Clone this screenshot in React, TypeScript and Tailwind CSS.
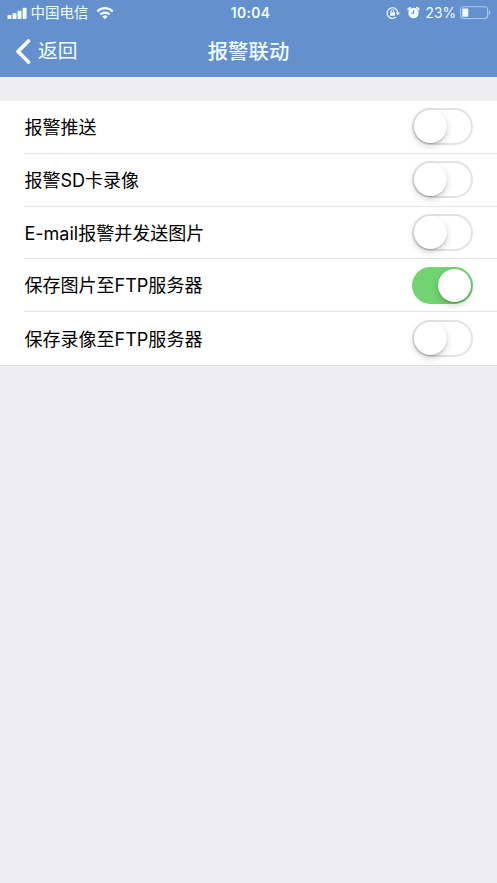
import { useState } from "react";

const FONT = "font-['Inter','Noto_Sans_CJK_SC',sans-serif]";

const initialItems = [
  { id: "push", label: "报警推送", on: false },
  { id: "sd", label: "报警SD卡录像", on: false },
  { id: "email", label: "E-mail报警并发送图片", on: false },
  { id: "ftp-image", label: "保存图片至FTP服务器", on: true },
  { id: "ftp-video", label: "保存录像至FTP服务器", on: false },
];

export default function App() {
  const [items, setItems] = useState(initialItems);

  const toggle = (id: string) => {
    setItems(items.map((i) => (i.id === id ? { ...i, on: !i.on } : i)));
  };

  return (
    <div className={`min-h-screen bg-[#eeeef0] ${FONT}`}>
      <header className="h-[77px] bg-[#6490ce] text-[#f2ffff]">
        <StatusBar />
        <div className="grid h-[51px] grid-cols-[1fr_auto_1fr] items-center">
          <button className="flex items-center pl-[15px] text-[19.8px]">
            <svg width="17" height="26" viewBox="0 0 17 26" fill="none">
              <path
                d="M13.5 2L3 12.5L13.5 23"
                stroke="#fff"
                strokeWidth="3.6"
                strokeLinecap="round"
                strokeLinejoin="round"
              />
            </svg>
            <span className="ml-[6px] pt-px leading-none">返回</span>
          </button>
          <h1 className="pt-px text-[20.4px] leading-none font-medium">
            报警联动
          </h1>
        </div>
      </header>

      <ul className="mt-6 border-b border-[#dfdfe1] bg-white">
        {items.map((item, index) => (
          <li key={item.id} className="flex h-[52.75px] pl-6">
            <div
              className={`flex flex-1 items-center justify-between pr-[24.5px] ${
                index < items.length - 1 ? "border-b border-[#e3e3e5]" : ""
              }`}
            >
              <span className="pt-[2.6px] pl-[0.4px] text-[18.05px] leading-none text-black">
                {item.label}
              </span>
              <Toggle on={item.on} onClick={() => toggle(item.id)} />
            </div>
          </li>
        ))}
      </ul>
    </div>
  );
}

function StatusBar() {
  return (
    <div className="grid h-[26px] grid-cols-[1fr_auto_1fr] items-center">
      <div className="flex items-center pl-[7px]">
        <svg width="20" height="13" viewBox="0 0 20 13" fill="currentColor">
          <rect x="0.5" y="8" width="4" height="4" rx="0.8" />
          <rect x="5.5" y="6.2" width="4" height="5.8" rx="0.8" />
          <rect x="10.5" y="3.8" width="4" height="8.2" rx="0.8" />
          <rect x="15.6" y="0.8" width="4" height="11.2" rx="0.8" />
        </svg>
        <span className="ml-[3.5px] text-[14.5px] leading-none">中国电信</span>
        <svg className="ml-[7px]" width="18" height="13" viewBox="0 0 18 13">
          <g fill="none" stroke="currentColor" strokeWidth="2.2">
            <path d="M1.3 4.4a10.8 10.8 0 0 1 15.4 0" />
            <path d="M4.3 7.6a6.6 6.6 0 0 1 9.4 0" />
          </g>
          <path d="M9 12.2L6.4 9.5a3.8 3.8 0 0 1 5.2 0z" fill="currentColor" />
        </svg>
      </div>
      <span className="pt-px pl-[4px] text-[13.8px] leading-none font-semibold tracking-[0.4px]">
        10:04
      </span>
      <div className="flex items-center justify-end pr-[6px]">
        {/* rotation lock */}
        <svg width="14" height="14" viewBox="0 0 14 14" fill="none">
          <path
            d="M10.2 10.8A5.3 5.3 0 1 1 11.7 6.5"
            stroke="currentColor"
            strokeWidth="1.2"
          />
          <path d="M9.8 6.4h4.2l-2.1 3z" fill="currentColor" />
          <rect x="4" y="6.2" width="5" height="3.6" rx="0.5" fill="currentColor" />
          <path
            d="M5.1 6.4V5.2a1.4 1.4 0 0 1 2.8 0v1.2"
            stroke="currentColor"
            strokeWidth="1"
          />
        </svg>
        {/* alarm */}
        <svg className="ml-[7px]" width="13" height="14" viewBox="0 0 13 14">
          <circle cx="6.5" cy="7" r="5.2" fill="currentColor" />
          <path
            d="M1.2 3.2L3 1.7M11.8 3.2L10 1.7"
            stroke="currentColor"
            strokeWidth="1.8"
            strokeLinecap="round"
          />
          <path
            d="M6.5 4v3.3H4.2"
            stroke="#6490ce"
            strokeWidth="1.1"
            fill="none"
          />
        </svg>
        <span className="ml-[6px] pt-[1.5px] text-[13.8px] leading-none">23%</span>
        <svg className="ml-[4px]" width="31" height="14" viewBox="0 0 31 14">
          <rect
            x="0.6"
            y="0.7"
            width="27"
            height="11.8"
            rx="3"
            fill="none"
            stroke="#a9c8ee"
            strokeWidth="1.1"
          />
          <rect x="2.3" y="2.4" width="6" height="8.4" rx="1" fill="currentColor" />
          <path d="M28.9 4.3c1.8.8 1.8 3.8 0 4.6z" fill="#a9c8ee" />
        </svg>
      </div>
    </div>
  );
}

function Toggle({ on, onClick }: { on: boolean; onClick: () => void }) {
  return (
    <button
      role="switch"
      aria-checked={on}
      onClick={onClick}
      className={`flex h-[37px] w-[61px] items-center rounded-full border-2 ${
        on
          ? "justify-end border-[#71d471] bg-[#71d471]"
          : "justify-start border-[#e3e3e5] bg-white"
      }`}
    >
      <span className="size-[33px] rounded-full bg-white shadow-[0_3px_7px_rgba(0,0,0,0.18),0_1px_1px_rgba(0,0,0,0.2)]" />
    </button>
  );
}
